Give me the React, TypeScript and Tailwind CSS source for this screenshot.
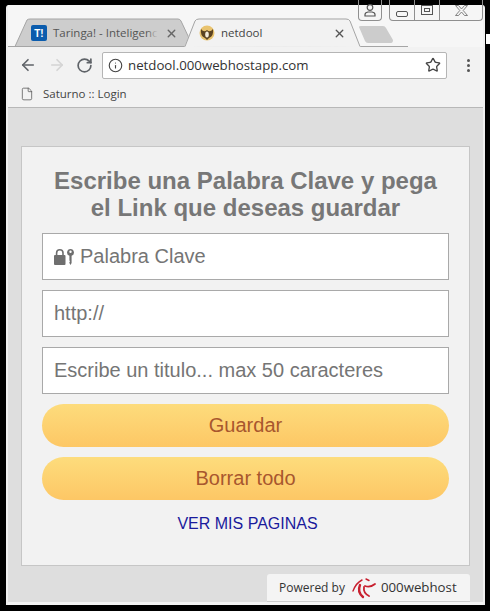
import { ArrowLeft, ArrowRight, RotateCw, Info, Star, X, File } from 'lucide-react'

const Field = ({ text, icon }: { text: string; icon?: boolean }) => (
  <div className="h-[47px] border border-[#a9a9a9] bg-white pl-[11px] flex items-center text-[20px] text-[#757575]">
    {icon && (
      <svg width="20" height="16" viewBox="0 0 20 16" className="mr-[6px]" fill="#6e6e6e">
        <path d="M1 6h9.500a1 1 0 0 1 1 1v8a1 1 0 0 1-1 1H1a1 1 0 0 1-1-1V7a1 1 0 0 1 1-1z" />
        <path d="M2.600 6V4a3.200 3.200 0 0 1 6.400 0v2" fill="none" stroke="#6e6e6e" strokeWidth="1.600" />
        <path d="M16.500 0a3.500 3.500 0 0 1 1.100 6.800V14l-1.100 2-1.100-2v-1l.8-.8-.8-.8V6.800A3.500 3.500 0 0 1 16.500 0zm0 1.600a1.200 1.200 0 1 0 0 2.400 1.200 1.200 0 0 0 0-2.400z" />
      </svg>
    )}
    <span className="-mt-[2px]">{text}</span>
  </div>
)

const OrangeButton = ({ label }: { label: string }) => (
  <div className="h-[43px] rounded-[22px] bg-gradient-to-b from-[#fddc7c] to-[#fdc765] flex items-center justify-center pb-[2px] text-[20px] text-[#a8572e]">
    {label}
  </div>
)

export default function App() {
  return (
    <div className="w-[490px] h-[611px] bg-black overflow-hidden pt-[5px] pl-[6px] pr-[5px] pb-[6px] font-['Liberation_Sans',sans-serif] relative">
      {/* stray bit of the desktop at the right edge */}
      <div className="absolute right-0 top-[34px] w-[4px] h-[10px] bg-white" />
      <div className="h-full rounded-t-[3px] bg-[#f4f4f4] flex flex-col border-x-2 border-[#f0f0f0] relative">
        {/* Tab strip */}
        <div className="h-[42px] relative shrink-0 bg-[#f6f6f6] -mb-px">
          <svg width="400" height="42" viewBox="0 0 400 42" className="absolute left-0 top-0">
            <path d="M-8 41.500 H400" stroke="#a5a5a5" />
            <path d="M7 41.500 L19 15 Q20 14 22 14 L170 14 Q172 14 173 16 L185 41.500 Z" fill="#cdcdcd" stroke="#a5a5a5" />
            <path d="M177 42 L187 16 Q188 14 191 14 L338 14 Q341 14 342 16 L352 41.500 Z" fill="#f2f2f2" stroke="#f2f2f2" />
            <path d="M177 41.500 L187 16 Q188 14 191 14 L338 14 Q341 14 342 16 L352 41.500" fill="none" stroke="#a5a5a5" />
            <path d="M351 22 Q351 21 353 21 L375 21 Q377 21 378 23 L385 35 Q385 38 383 38 L360 38 Q358 38 357 36 Z" fill="#cccccc" />
          </svg>
          {/* window buttons */}
          <div className="absolute right-0 -top-[5px] h-[21px] flex gap-[7px]">
            <div className="w-[24px] h-[21px] border border-t-0 border-[#8f8f8f] rounded-b-[4px] flex items-center justify-center">
              <svg width="12" height="13" viewBox="0 0 12 13" fill="none" stroke="#555" strokeWidth="1.200">
                <circle cx="6" cy="3.500" r="2.800" />
                <path d="M1 12v-1.500q0-2 3-2.500h4q3 .5 3 2.500V12z" />
              </svg>
            </div>
            <div className="h-[21px] w-[94px] border border-t-0 border-[#8f8f8f] rounded-b-[4px] flex">
              <div className="w-[25px] border-r border-[#8f8f8f] flex items-end justify-center pb-[3px]">
                <div className="w-[12px] h-[6px] border border-[#555] rounded-[2px]" />
              </div>
              <div className="w-[25px] border-r border-[#8f8f8f] flex items-center justify-center">
                <div className="w-[12px] h-[10px] border border-[#555] flex items-center justify-center">
                  <div className="w-[6px] h-[4px] border border-[#555]" />
                </div>
              </div>
              <div className="flex-1 flex items-center justify-center">
                <svg width="13" height="11" viewBox="0 0 13 11" fill="#f6f6f6" stroke="#777" strokeWidth="0.900">
                  <path d="M.500.500h3L6.500 4l3-3.500h3L8.200 5.500l4.300 5h-3L6.500 7l-3 3.500h-3l4.300-5z" />
                </svg>
              </div>
            </div>
          </div>
          {/* Taringa tab */}
          <div className="absolute left-[23px] top-[20px] h-[16px] flex items-center w-[156px] text-[11.5px] font-['Open_Sans',sans-serif] text-[#555]">
            <div className="w-[16px] h-[16px] rounded-[2px] bg-[#0b5cad] text-white text-[10px] font-bold flex items-center justify-center font-['Liberation_Sans',sans-serif] shrink-0">T!</div>
            <span className="ml-[6px] whitespace-nowrap relative">
              Taringa! - Inteligenc
              <span className="absolute right-0 top-0 h-full w-[12px] bg-gradient-to-r from-transparent to-[#cdcdcd]" />
            </span>
            <X size={13} strokeWidth={2.5} color="#666" className="absolute right-[9px] top-[2px]" />
          </div>
          {/* netdool tab */}
          <div className="absolute left-[191px] top-[20px] h-[16px] flex items-center w-[147px] text-[11.5px] font-['Open_Sans',sans-serif] text-[#444]">
            <svg width="16" height="16" viewBox="0 0 16 16">
              <circle cx="8" cy="8" r="7.500" fill="#e9c36e" />
              <path d="M8 5 Q5 8 2 4 Q1 11 6 13 L8 15 L10 13 Q15 11 14 4 Q11 8 8 5z" fill="#5b4320" />
              <ellipse cx="8" cy="9.500" rx="1.800" ry="3" fill="#f5ecd8" />
            </svg>
            <span className="ml-[6px]">netdool</span>
            <X size={13} strokeWidth={2.5} color="#555" className="ml-auto" />
          </div>
        </div>
        {/* Toolbar */}
        <div className="h-[35px] shrink-0 bg-[#f2f2f2] flex items-center pl-[11px] pr-[13px] pt-[3px]">
          <ArrowLeft size={18} strokeWidth={2.2} color="#5f6368" />
          <ArrowRight size={18} strokeWidth={2.2} color="#d4d4d4" className="ml-[11px]" />
          <RotateCw size={17} strokeWidth={2.4} color="#5f6368" className="ml-[10px]" />
          <div className="ml-[9px] h-[27px] w-[345px] rounded-[2px] border border-[#b5b5b5] bg-white flex items-center pl-[5px] pr-[5px] font-['Open_Sans',sans-serif] text-[13.25px] text-[#333]">
            <Info size={15} strokeWidth={1.8} color="#444" />
            <span className="ml-[5px] mt-[2px]">netdool.000webhostapp.com</span>
            <Star size={16} strokeWidth={2} color="#444" className="ml-auto" />
          </div>
          <div className="ml-auto flex flex-col gap-[2px]">
            <div className="w-[3px] h-[3px] rounded-full bg-[#555]" />
            <div className="w-[3px] h-[3px] rounded-full bg-[#555]" />
            <div className="w-[3px] h-[3px] rounded-full bg-[#555]" />
          </div>
        </div>
        {/* Bookmarks */}
        <div className="h-[27px] shrink-0 bg-[#f2f2f2] border-b border-[#b8b8b8] flex items-center pl-[12px] text-[11.5px] text-[#444] font-['Open_Sans',sans-serif]">
          <File size={14} strokeWidth={1.3} color="#555" />
          <span className="ml-[9px]">Saturno :: Login</span>
        </div>
        {/* Page */}
        <div className="flex-1 bg-[#dedede] pt-[38px] pl-[13px] pr-[13px] relative mb-[3px]">
          <div className="h-[420px] w-[449px] bg-[#f2f2f2] border border-[#c6c6c6] pt-[20px] px-[20px]">
            <h1 className="text-center text-[24px] leading-[27px] font-bold text-[#777]">
              Escribe una Palabra Clave y pega<br />el Link que deseas guardar
            </h1>
            <div className="mt-[12px] flex flex-col gap-[10px]">
              <Field text="Palabra Clave" icon />
              <Field text="http://" />
              <Field text="Escribe un titulo... max 50 caracteres" />
              <OrangeButton label="Guardar" />
              <OrangeButton label="Borrar todo" />
            </div>
            <div className="mt-[15px] pl-[4px] text-center text-[16px] leading-[18px] text-[#1a1a9c]">VER MIS PAGINAS</div>
          </div>
          {/* 000webhost badge */}
          <div className="absolute left-[259px] bottom-0 w-[203px] h-[28px] rounded-t-[3px] bg-[#f4f4f4] border-b border-[#cccccc] flex items-center pl-[12px] pt-[1px] text-[12px] font-['Open_Sans',sans-serif] text-[#333]">
            <span>Powered by</span>
            <svg width="24" height="22" viewBox="0 0 24 22" className="ml-[7px]" fill="none" stroke="#c8202f" strokeLinecap="round">
              <path d="M10 3 Q4 6 1 14" strokeWidth="1.400" />
              <path d="M8 8 Q5 15 11 20" strokeWidth="2.400" />
              <path d="M12 10 Q11 16 17 19" strokeWidth="1.800" />
              <path d="M13 9 Q18 11 23 7" strokeWidth="1.800" />
              <path d="M14 2 l3 1.500" strokeWidth="1.400" />
            </svg>
            <span className="ml-[5px] text-[13.25px]">000webhost</span>
          </div>
        </div>
      </div>
    </div>
  )
}
